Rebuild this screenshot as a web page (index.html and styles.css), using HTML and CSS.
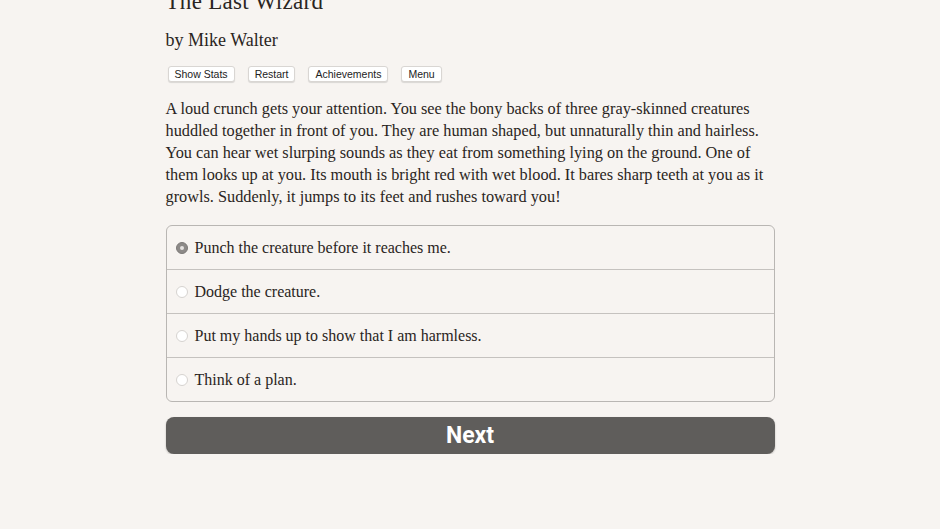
FILE: index.html
```html
<!DOCTYPE html>
<html>
<head>
<meta charset="utf-8">
<link rel="stylesheet" href="styles.css">
</head>
<body>
<div class="page">
  <h1 class="title">The Last Wizard</h1>
  <h2 class="author">by Mike Walter</h2>
  <div class="toolbar">
    <button class="tbtn">Show Stats</button>
    <button class="tbtn">Restart</button>
    <button class="tbtn">Achievements</button>
    <button class="tbtn">Menu</button>
  </div>
  <p class="story">A loud crunch gets your attention. You see the bony backs of three gray-skinned creatures huddled together in front of you. They are human shaped, but unnaturally thin and hairless. You can hear wet slurping sounds as they eat from something lying on the ground. One of them looks up at you. Its mouth is bright red with wet blood. It bares sharp teeth at you as it growls. Suddenly, it jumps to its feet and rushes toward you!</p>
  <div class="choices">
    <div class="choice"><span class="radio checked"></span><span>Punch the creature before it reaches me.</span></div>
    <div class="choice"><span class="radio"></span><span>Dodge the creature.</span></div>
    <div class="choice"><span class="radio"></span><span>Put my hands up to show that I am harmless.</span></div>
    <div class="choice"><span class="radio"></span><span>Think of a plan.</span></div>
  </div>
  <button class="next">Next</button>
</div>
</body>
</html>
```
FILE: styles.css
```css
html, body {
  margin: 0;
  padding: 0;
  background: #f7f4f1;
}
body {
  font-family: "Liberation Serif", "Times New Roman", serif;
  color: #2a2522;
}
.page {
  width: 609px;
  margin: 0 auto;
  display: flex;
  flex-direction: column;
  align-items: stretch;
}
.title {
  margin: -12px 0 0 0;
  font-size: 23px;
  font-weight: normal;
  line-height: 28px;
  letter-spacing: 0.3px;
}
.author {
  margin: 13px 0 0 0;
  font-size: 18px;
  font-weight: normal;
  line-height: 22px;
}
.toolbar {
  display: flex;
  gap: 13px;
  margin-top: 15px;
  padding-left: 2px;
}
.tbtn {
  font-family: "Liberation Sans", Arial, sans-serif;
  font-size: 10.5px;
  color: #222;
  background: #fff;
  border: 1px solid #d9d6d3;
  border-radius: 3px;
  box-shadow: 0 1px 1px rgba(0,0,0,0.12);
  padding: 0 6px;
  height: 16px;
  line-height: 14px;
}
.story {
  margin: 16px 0 0 0;
  font-size: 16.3px;
  line-height: 22px;
  width: 612px;
}
.choices {
  margin-top: 17px;
  border: 1px solid #b9b6b3;
  border-radius: 6px;
  background: #f7f4f1;
  overflow: hidden;
}
.choice {
  display: flex;
  align-items: center;
  gap: 7px;
  height: 43px;
  padding-left: 9px;
  font-size: 16px;
  border-top: 1px solid #c5c2bf;
}
.choice:first-child {
  border-top: none;
}
.radio {
  width: 12px;
  height: 12px;
  border-radius: 50%;
  background: #fff;
  border: 1px solid #d6d3d0;
  box-sizing: border-box;
  flex: none;
}
.radio.checked {
  background: #8d8a88;
  border: 1px solid #7d7a78;
  position: relative;
}
.radio.checked::after {
  content: "";
  position: absolute;
  left: 3px;
  top: 3px;
  width: 4px;
  height: 4px;
  border-radius: 50%;
  background: #e6e3e1;
}
.next {
  margin-top: 15px;
  height: 37px;
  border: none;
  border-radius: 8px;
  background: #5f5d5b;
  color: #fff;
  font-family: Roboto, "Liberation Sans", Arial, sans-serif;
  font-weight: bold;
  font-size: 23px;
  box-shadow: 0 1px 2px rgba(0,0,0,0.25);
}
```
